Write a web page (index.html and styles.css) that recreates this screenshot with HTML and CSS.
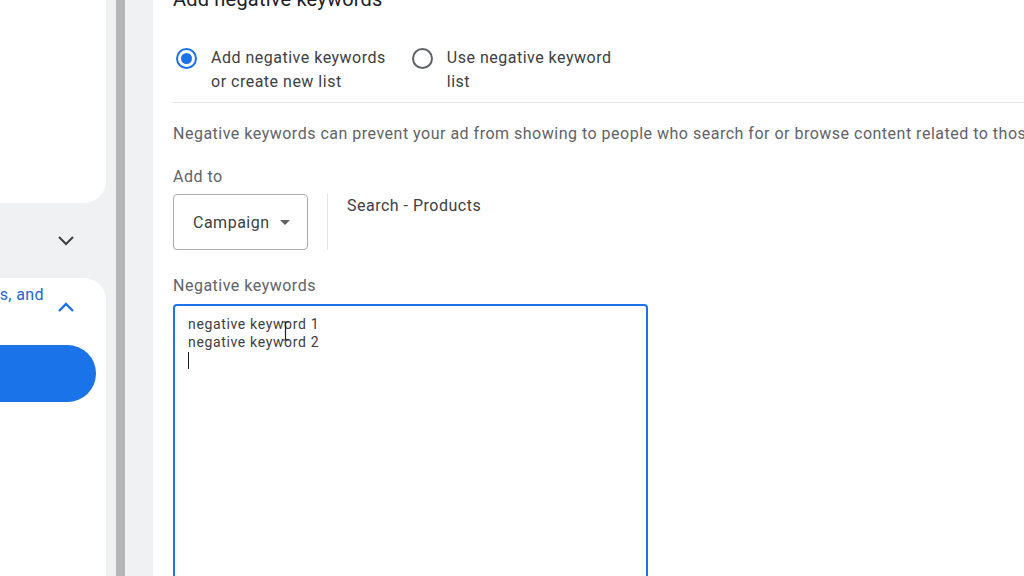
FILE: index.html
```html
<!DOCTYPE html>
<html lang="en">
<head>
<meta charset="utf-8">
<title>Add negative keywords</title>
<link rel="stylesheet" href="styles.css">
</head>
<body>
<div class="page">
  <aside class="sidebar">
    <div class="card card-top"></div>
    <div class="collapsed-row">
      <svg class="chev" width="18" height="12" viewBox="0 0 18 12"><path d="M2 2 L9 9 L16 2" fill="none" stroke="#3c4043" stroke-width="2"/></svg>
    </div>
    <div class="card card-bottom">
      <div class="section-head">
        <span class="section-title">Keywords, search terms, and</span>
        <svg class="chev-up" width="18" height="12" viewBox="0 0 18 12"><path d="M2 10 L9 3 L16 10" fill="none" stroke="#1a73e8" stroke-width="2.4"/></svg>
      </div>
      <div class="pill"></div>
    </div>
  </aside>
  <div class="gap"></div>
  <div class="scrollbar"></div>
  <div class="gutter"></div>
  <main class="main">
    <h2 class="title">Add negative keywords</h2>
    <div class="radio-group">
      <label class="radio-item">
        <span class="radio checked"><span class="dot"></span></span>
        <span class="radio-label">Add negative keywords<br>or create new list</span>
      </label>
      <label class="radio-item">
        <span class="radio"></span>
        <span class="radio-label">Use negative keyword<br>list</span>
      </label>
    </div>
    <div class="divider"></div>
    <p class="desc">Negative keywords can prevent your ad from showing to people who search for or browse content related to those terms.</p>
    <div class="field-label add-to">Add to</div>
    <div class="add-row">
      <div class="dropdown">
        <span>Campaign</span>
        <span class="caret"></span>
      </div>
      <div class="vdivider"></div>
      <div class="target">Search - Products</div>
    </div>
    <div class="field-label kw-label">Negative keywords</div>
    <div class="textarea">
      <div class="line">negative keyword 1</div>
      <div class="line">negative keyword 2</div>
      <div class="line"><span class="text-caret"></span></div>
      <svg class="ibeam" width="9" height="20" viewBox="0 0 9 20"><path d="M1 1 H8 M4.5 1 V19 M1 19 H8" fill="none" stroke="#202124" stroke-width="1.2"/></svg>
    </div>
  </main>
</div>
</body>
</html>
```

FILE: styles.css
```css
* { box-sizing: border-box; }
html, body {
  margin: 0;
  padding: 0;
  width: 1024px;
  height: 576px;
  overflow: hidden;
  font-family: Roboto, "Liberation Sans", Arial, sans-serif;
}
.page {
  display: flex;
  width: 1024px;
  height: 576px;
  background: #eff1f3;
}
.sidebar {
  width: 106px;
  flex: none;
  display: flex;
  flex-direction: column;
}
.card { background: #ffffff; }
.card-top {
  height: 203px;
  border-bottom-right-radius: 22px;
}
.collapsed-row {
  height: 75px;
  display: flex;
  align-items: center;
  justify-content: flex-end;
  padding-right: 31px;
}
.chev { display: block; margin-top: 1px; }
.card-bottom {
  flex: 1;
  border-top-right-radius: 22px;
  display: flex;
  flex-direction: column;
}
.section-head {
  display: flex;
  align-items: flex-start;
  height: 67px;
  padding-top: 5px;
}
.section-title {
  width: 44px;
  flex: none;
  display: flex;
  justify-content: flex-end;
  white-space: nowrap;
  overflow: hidden;
  color: #1967d2;
  font-size: 16px;
  line-height: 24px;
  letter-spacing: 0.4px;
}
.chev-up { margin-left: 13px; margin-top: 18px; }
.pill {
  width: 96px;
  height: 57px;
  background: #1a73e8;
  border-radius: 0 29px 29px 0;
}
.gap { width: 10px; flex: none; }
.scrollbar { width: 9px; flex: none; background: #b4b5b7; }
.gutter { width: 28px; flex: none; }
.main {
  flex: 1;
  min-width: 0;
  background: #ffffff;
  padding-left: 20px;
  overflow: hidden;
  color: #3c4043;
  letter-spacing: 0.5px;
}
.title {
  margin: -13px 0 0 0;
  font-size: 20px;
  line-height: 24px;
  font-weight: 400;
  color: #202124;
  white-space: nowrap;
  letter-spacing: 0.2px;
}
.radio-group {
  display: flex;
  margin-top: 35px;
  gap: 23px;
}
.radio-item {
  display: flex;
  align-items: flex-start;
  gap: 14px;
  padding-left: 3px;
}
.radio {
  width: 21px;
  height: 21px;
  margin-top: 2px;
  border: 2px solid #5f6368;
  border-radius: 50%;
  display: flex;
  align-items: center;
  justify-content: center;
  flex: none;
}
.radio.checked { border-color: #1a73e8; }
.dot {
  width: 11px;
  height: 11px;
  border-radius: 50%;
  background: #1a73e8;
}
.radio-label {
  font-size: 16px;
  line-height: 24px;
  color: #3c4043;
  white-space: nowrap;
}
.divider {
  margin-top: 8px;
  height: 1px;
  background: #e6e7e9;
}
.desc {
  margin: 19px 0 0 0;
  font-size: 16px;
  line-height: 24px;
  color: #5f6368;
  white-space: nowrap;
}
.field-label {
  font-size: 16px;
  line-height: 24px;
  color: #5f6368;
}
.add-to { margin-top: 19px; }
.add-row {
  display: flex;
  align-items: flex-start;
  margin-top: 5px;
}
.dropdown {
  width: 135px;
  height: 56px;
  border: 1px solid #a8abaf;
  border-radius: 4px;
  display: flex;
  align-items: center;
  padding-left: 19px;
  gap: 10px;
  font-size: 16px;
  color: #3c4043;
}
.caret {
  width: 0;
  height: 0;
  border-left: 5px solid transparent;
  border-right: 5px solid transparent;
  border-top: 5px solid #5f6368;
}
.vdivider {
  width: 1px;
  height: 56px;
  background: #e3e4e6;
  margin: 0 19px;
}
.target {
  font-size: 16px;
  line-height: 24px;
  color: #3c4043;
}
.kw-label { margin-top: 24px; }
.textarea {
  position: relative;
  margin-top: 6px;
  width: 475px;
  height: 320px;
  border: 2px solid #1a73e8;
  border-radius: 4px;
  padding: 9px 13px;
  font-size: 14px;
  line-height: 18px;
  color: #3c4043;
  letter-spacing: 0.65px;
}
.line { height: 18px; white-space: nowrap; }
.text-caret {
  display: inline-block;
  width: 1px;
  height: 17px;
  margin-top: 1px;
  background: #202124;
  vertical-align: top;
}
.ibeam {
  position: absolute;
  left: 106px;
  top: 15px;
}
```
